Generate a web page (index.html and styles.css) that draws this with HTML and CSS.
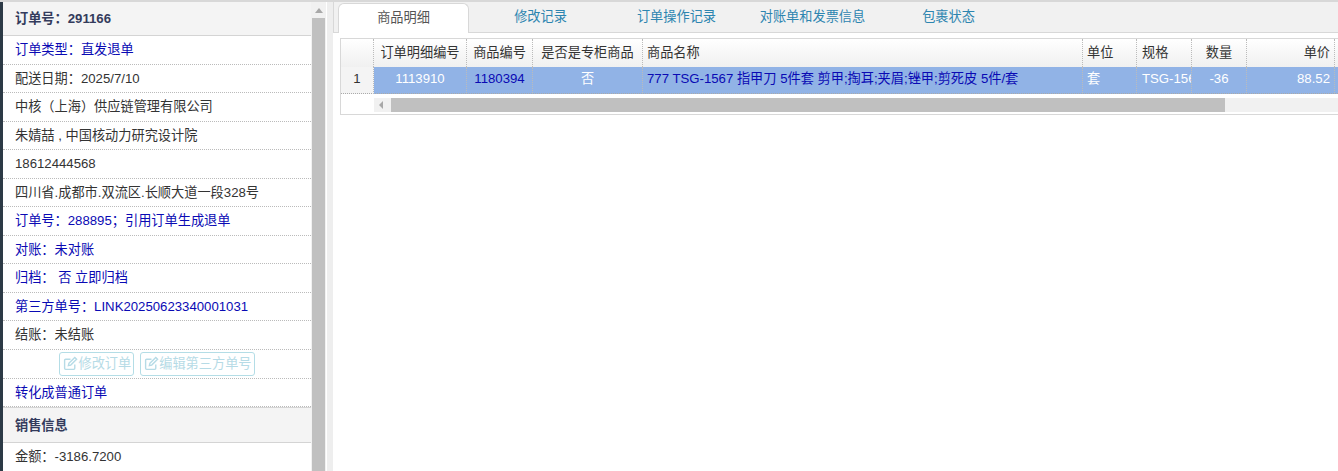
FILE: index.html
```html
<!DOCTYPE html>
<html lang="zh-CN">
<head>
<meta charset="utf-8">
<title>订单详情</title>
<link rel="stylesheet" href="styles.css">
</head>
<body>
<div class="page">
  <aside class="side">
    <div class="side-list">
      <div class="head">订单号：291166</div>
      <div class="row blue">订单类型：直发退单</div>
      <div class="row">配送日期：2025/7/10</div>
      <div class="row">中核（上海）供应链管理有限公司</div>
      <div class="row">朱婧喆 , 中国核动力研究设计院</div>
      <div class="row">18612444568</div>
      <div class="row">四川省.成都市.双流区.长顺大道一段328号</div>
      <div class="row blue">订单号：288895；引用订单生成退单</div>
      <div class="row blue">对账：未对账</div>
      <div class="row blue">归档： 否 立即归档</div>
      <div class="row blue">第三方单号：LINK20250623340001031</div>
      <div class="row">结账：未结账</div>
      <div class="row btns">
        <span class="btn"><svg class="ico" viewBox="0 0 14 14"><path d="M11 8v3.5a1 1 0 0 1-1 1H2.5a1 1 0 0 1-1-1V4a1 1 0 0 1 1-1H7"/><path d="M5.5 6.8 11 1.3l1.7 1.7-5.5 5.5-2.2.5z"/></svg>修改订单</span>
        <span class="btn"><svg class="ico" viewBox="0 0 14 14"><path d="M11 8v3.5a1 1 0 0 1-1 1H2.5a1 1 0 0 1-1-1V4a1 1 0 0 1 1-1H7"/><path d="M5.5 6.8 11 1.3l1.7 1.7-5.5 5.5-2.2.5z"/></svg>编辑第三方单号</span>
      </div>
      <div class="row blue">转化成普通订单</div>
      <div class="head sub">销售信息</div>
      <div class="row">金额：-3186.7200</div>
    </div>
    <div class="vbar"><span class="arrow-up"></span><span class="vthumb"></span></div>
  </aside>
  <main class="main">
    <nav class="tabs">
      <span class="tab active">商品明细</span>
      <span class="tab">修改记录</span>
      <span class="tab">订单操作记录</span>
      <span class="tab">对账单和发票信息</span>
      <span class="tab">包裹状态</span>
    </nav>
    <div class="grid">
      <div class="tr th">
        <span class="c c0"></span>
        <span class="c c1 ctr">订单明细编号</span>
        <span class="c c2 ctr">商品编号</span>
        <span class="c c3 ctr">是否是专柜商品</span>
        <span class="c c4">商品名称</span>
        <span class="c c5">单位</span>
        <span class="c c6">规格</span>
        <span class="c c7 ctr">数量</span>
        <span class="c c8 rgt">单价</span>
      </div>
      <div class="tr td">
        <span class="c c0 num">1</span>
        <span class="c c1 ctr">1113910</span>
        <span class="c c2 ctr link">1180394</span>
        <span class="c c3 ctr">否</span>
        <span class="c c4 link">777 TSG-1567 指甲刀 5件套 剪甲;掏耳;夹眉;锉甲;剪死皮 5件/套</span>
        <span class="c c5">套</span>
        <span class="c c6">TSG-1567</span>
        <span class="c c7 ctr">-36</span>
        <span class="c c8 rgt">88.52</span>
      </div>
      <div class="hbar"><span class="hcorner"></span><span class="harrow"></span><span class="hthumb"></span></div>
    </div>
  </main>
</div>
</body>
</html>
```

FILE: styles.css
```css
html, body { margin: 0; height: 100%; overflow: hidden; background: #fff; }
body { font: 13.2px/1 "Liberation Sans", "Noto Sans CJK SC", sans-serif; color: #333; }
.page { display: flex; height: 471px; border-top: 2px solid #d8d8d8; box-sizing: border-box; }
.side { width: 333px; flex: none; padding-left: 3px; box-sizing: border-box; display: flex; overflow: hidden; border-right: 6px solid #eee; background: linear-gradient(90deg, #2c3a46 3px, #fff 3px); }
.side-list { width: 308px; flex: none; }
.head { height: 33px; line-height: 33px; padding-left: 12px; background: #f4f4f4; border-bottom: 1px solid #d4d4d4; color: #333b5c; font-weight: bold; }
.head.sub { height: 34px; line-height: 35px; border-top: 1px solid #d4d4d4; }
.row { height: 27.5px; line-height: 27px; padding-left: 12px; border-bottom: 1px dotted #bbb; white-space: nowrap; }
.blue { color: #0a0ab4; }
.btns { display: flex; justify-content: center; align-items: center; gap: 6px; padding-left: 0; margin-right: 0; height: 28px; }
.btn { display: flex; align-items: center; height: 22px; padding: 0 2px 0 3px; border: 1px solid #b4dde6; border-radius: 3px; color: #b6dbe6; }
.ico { width: 15px; height: 15px; fill: none; stroke: #b6dbe6; stroke-width: 1.3; }
.vbar { width: 15px; flex: none; background: #f1f1f1; display: flex; flex-direction: column; align-items: center; }
.arrow-up { margin-top: 6px; border: 4px solid transparent; border-top: 0; border-bottom: 5px solid #a8a8a8; }
.vthumb { width: 13px; flex: 1; margin-top: 5px; background: #c0c0c0; }
.main { flex: 1; min-width: 0; overflow: hidden; }
.tabs { display: flex; height: 30px; padding-left: 5px; background: #f1f1f1; border-bottom: 1px solid #d8d8d8; box-shadow: inset 1px 0 #d8d8d8; }
.tab { width: 129px; margin-left: 7px; text-align: center; line-height: 29px; color: #2d85b0; }
.tab:first-child { width: 131px; margin: 1px 0 -1px 0; height: 30px; box-sizing: border-box; line-height: 27px; background: #fff; border: 1px solid #d8d8d8; border-bottom: 0; border-radius: 6px 6px 0 0; color: #555; }
.grid { margin: 5px 0 0 7px; border: 1px solid #d8d8d8; border-right: 0; height: 75px; }
.tr { display: flex; }
.th { height: 28px; background: linear-gradient(#fff, #f0f0f0); }
.td { height: 26px; background: #91b3e6; color: #fff; border-bottom: 1px dotted #aaa; }
.c { flex: none; box-sizing: border-box; padding: 0 4px; line-height: 27px; border-right: 1px dotted #bbb; overflow: hidden; white-space: nowrap; }
.td .c { line-height: 24px; }
.ctr { text-align: center; padding: 0; }
.rgt { text-align: right; }
.c0 { width: 33px; }
.num { background: #f4f4f4; color: #333; text-align: center; border-bottom: 1px dotted #aaa; height: 27px; }
.c1 { width: 93px; }
.c2 { width: 66px; }
.c3 { width: 110px; }
.c4 { width: 440px; }
.c5 { width: 54px; }
.c6 { width: 55px; padding-left: 5px; }
.c7 { width: 55px; }
.c8 { width: 88px; }
.link { color: #0a0ab4; }
.hbar { display: flex; height: 14px; margin-top: 4px; align-items: center; background: #f1f1f1; }
.hcorner { width: 33px; height: 14px; background: #fff; flex: none; }
.harrow { width: 0; height: 0; margin: 0 8px 0 5px; border: 4px solid transparent; border-left: 0; border-right: 4px solid #a8a8a8; flex: none; }
.hthumb { width: 834px; height: 14px; flex: none; background: #c0c0c0; }
```
